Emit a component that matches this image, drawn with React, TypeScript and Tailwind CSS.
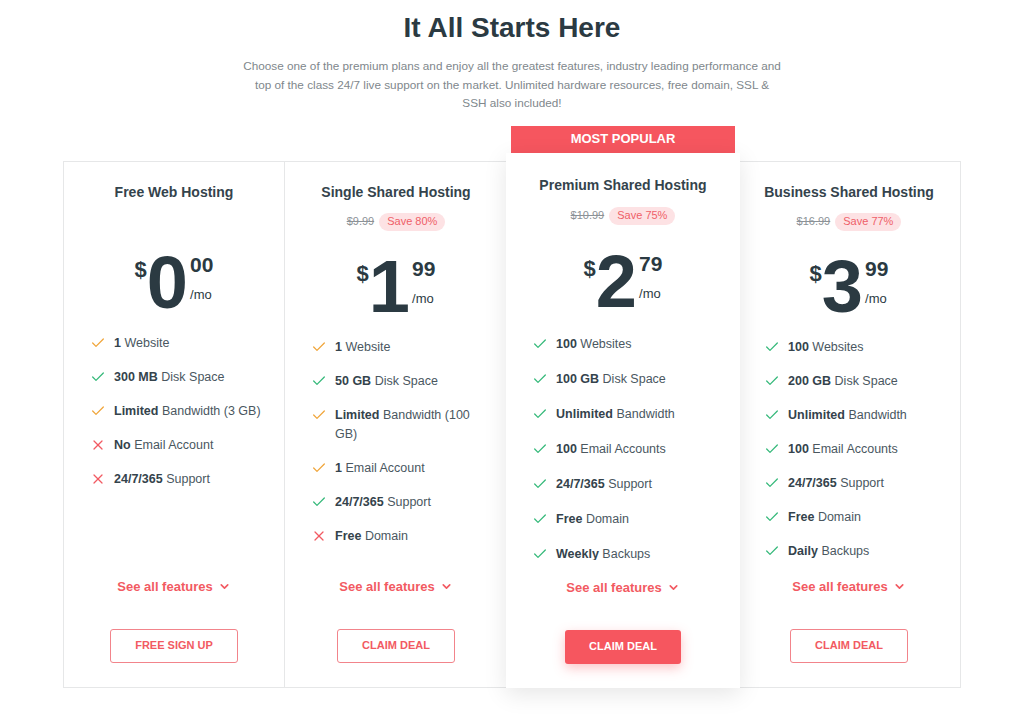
import { Check, ChevronDown, X } from 'lucide-react';

type Mark = 'ok' | 'warn' | 'no';
type Feature = { b: string; t: string; m: Mark };
type Plan = {
    name: string;
    old?: string;
    save?: string;
    whole: string;
    cents: string;
    cta: string;
    kind: 'free' | 'std' | 'pop';
    features: Feature[];
};

const PLANS: Plan[] = [
    {
        name: 'Free Web Hosting',
        whole: '0',
        cents: '00',
        cta: 'Free Sign Up',
        kind: 'free',
        features: [
            { b: '1', t: 'Website', m: 'warn' },
            { b: '300 MB', t: 'Disk Space', m: 'ok' },
            { b: 'Limited', t: 'Bandwidth (3 GB)', m: 'warn' },
            { b: 'No', t: 'Email Account', m: 'no' },
            { b: '24/7/365', t: 'Support', m: 'no' },
        ],
    },
    {
        name: 'Single Shared Hosting',
        old: '$9.99',
        save: 'Save 80%',
        whole: '1',
        cents: '99',
        cta: 'Claim Deal',
        kind: 'std',
        features: [
            { b: '1', t: 'Website', m: 'warn' },
            { b: '50 GB', t: 'Disk Space', m: 'ok' },
            { b: 'Limited', t: 'Bandwidth (100 GB)', m: 'warn' },
            { b: '1', t: 'Email Account', m: 'warn' },
            { b: '24/7/365', t: 'Support', m: 'ok' },
            { b: 'Free', t: 'Domain', m: 'no' },
        ],
    },
    {
        name: 'Premium Shared Hosting',
        old: '$10.99',
        save: 'Save 75%',
        whole: '2',
        cents: '79',
        cta: 'Claim Deal',
        kind: 'pop',
        features: [
            { b: '100', t: 'Websites', m: 'ok' },
            { b: '100 GB', t: 'Disk Space', m: 'ok' },
            { b: 'Unlimited', t: 'Bandwidth', m: 'ok' },
            { b: '100', t: 'Email Accounts', m: 'ok' },
            { b: '24/7/365', t: 'Support', m: 'ok' },
            { b: 'Free', t: 'Domain', m: 'ok' },
            { b: 'Weekly', t: 'Backups', m: 'ok' },
        ],
    },
    {
        name: 'Business Shared Hosting',
        old: '$16.99',
        save: 'Save 77%',
        whole: '3',
        cents: '99',
        cta: 'Claim Deal',
        kind: 'std',
        features: [
            { b: '100', t: 'Websites', m: 'ok' },
            { b: '200 GB', t: 'Disk Space', m: 'ok' },
            { b: 'Unlimited', t: 'Bandwidth', m: 'ok' },
            { b: '100', t: 'Email Accounts', m: 'ok' },
            { b: '24/7/365', t: 'Support', m: 'ok' },
            { b: 'Free', t: 'Domain', m: 'ok' },
            { b: 'Daily', t: 'Backups', m: 'ok' },
        ],
    },
];

function MarkIcon({ m }: { m: Mark }) {
    if (m === 'no') return <X size={16} strokeWidth={1.9} color="#f25a62" className="flex-none" />;
    return <Check size={16} strokeWidth={1.9} color={m === 'ok' ? '#35b97a' : '#f0a53a'} className="flex-none" />;
}

function Price({ whole, cents }: { whole: string; cents: string }) {
    return (
        <div className="flex items-start justify-center font-bold text-[#2b3a42]">
            <span className="mt-[13px] text-[22px] leading-none">$</span>
            <span className="text-[74px] leading-none">{whole}</span>
            <div className="ml-[2px] flex flex-col items-start">
                <span className="mt-[8px] text-[21px] leading-none">{cents}</span>
                <span className="mt-[12px] text-[13px] font-normal leading-4">/mo</span>
            </div>
        </div>
    );
}

function PlanCard({ plan, className }: { plan: Plan; className: string }) {
    const pop = plan.kind === 'pop';
    const free = plan.kind === 'free';

    return (
        <div className={`flex flex-col bg-white ${pop ? 'pt-[22px]' : 'pt-[20px]'} ${className}`}>
            <h3 className="text-center text-[14px] font-bold leading-5 text-[#34434c]">{plan.name}</h3>

            {plan.old && (
                <div className={`flex items-center justify-center gap-[5px] ${pop ? 'mt-[12px]' : 'mt-[11px]'}`}>
                    <span className="text-[11px] text-[#8c9297] line-through">{plan.old}</span>
                    <span className="flex h-[18px] items-center rounded-full bg-[#fde2e4] px-[8px] text-[11px] text-[#ef5f68]">
                        {plan.save}
                    </span>
                </div>
            )}

            <div className={free ? 'mt-[44px]' : pop ? 'mt-[20px]' : 'mt-[19px]'}>
                <Price whole={plan.whole} cents={plan.cents} />
            </div>

            <ul
                className={`flex flex-col gap-[15px] overflow-hidden pl-[26px] pr-[22px] text-[12.5px] text-[#4a575f] ${
                    free ? 'mt-[14px] h-[230px] leading-[19px]' : pop ? 'mt-[15px] h-[226px] leading-5' : 'mt-[14px] h-[222px] leading-[19px]'
                }`}
            >
                {plan.features.map((f) => (
                    <li key={f.b + f.t} className="flex items-start gap-[8px]">
                        <span className={`flex items-center ${pop ? 'h-5' : 'h-[19px]'}`}>
                            <MarkIcon m={f.m} />
                        </span>
                        <span>
                            <b className="font-bold text-[#34434c]">{f.b}</b> {f.t}
                        </span>
                    </li>
                ))}
            </ul>

            <div className="mt-auto flex flex-col items-center pb-[24px]">
                <button className="flex items-center gap-[5px] text-[13px] font-bold leading-5 text-[#f25a62]">
                    See all features
                    <ChevronDown size={13} strokeWidth={3} />
                </button>
                <button
                    className={`mt-[32px] h-[34px] rounded-[3px] px-[24px] text-[11px] font-bold uppercase ${
                        pop
                            ? 'bg-[#f6565f] text-white shadow-[0_4px_12px_rgba(246,86,95,0.35)]'
                            : 'border border-[#f2848b] text-[#f25a62]'
                    }`}
                >
                    {plan.cta}
                </button>
            </div>
        </div>
    );
}

export default function App() {
    return (
        <div className="min-h-screen bg-white font-['Liberation_Sans',Arial,sans-serif]">
            <div className="pt-[11px] text-center">
                <h1 className="text-[28px] font-bold leading-[34px] text-[#2b3a42]">It All Starts Here</h1>
                <p className="mx-auto mt-[12px] max-w-[540px] text-[11.75px] leading-[18.5px] text-[#80878c]">
                    Choose one of the premium plans and enjoy all the greatest features, industry leading performance and
                    top of the class 24/7 live support on the market. Unlimited hardware resources, free domain, SSL &amp;
                    SSH also included!
                </p>
            </div>

            <div className="mx-auto mt-[13px] grid w-[898px] grid-cols-[222px_223px_230px_223px]">
                <div className="mt-[35px]">
                    <PlanCard plan={PLANS[0]} className="h-[527px] border border-[#e6e7e8]" />
                </div>
                <div className="mt-[35px]">
                    <PlanCard plan={PLANS[1]} className="h-[527px] border-y border-r border-[#e6e7e8]" />
                </div>
                <div className="relative z-10 flex flex-col">
                    <div className="mx-[3px] flex h-[27px] items-center justify-center bg-[#f6565f] text-[13px] font-bold text-white">
                        MOST POPULAR
                    </div>
                    <PlanCard
                        plan={PLANS[2]}
                        className="-mx-[2px] h-[535px] shadow-[0_6px_22px_rgba(0,0,0,0.10)]"
                    />
                </div>
                <div className="mt-[35px]">
                    <PlanCard plan={PLANS[3]} className="h-[527px] border-y border-r border-[#e6e7e8]" />
                </div>
            </div>
        </div>
    );
}
